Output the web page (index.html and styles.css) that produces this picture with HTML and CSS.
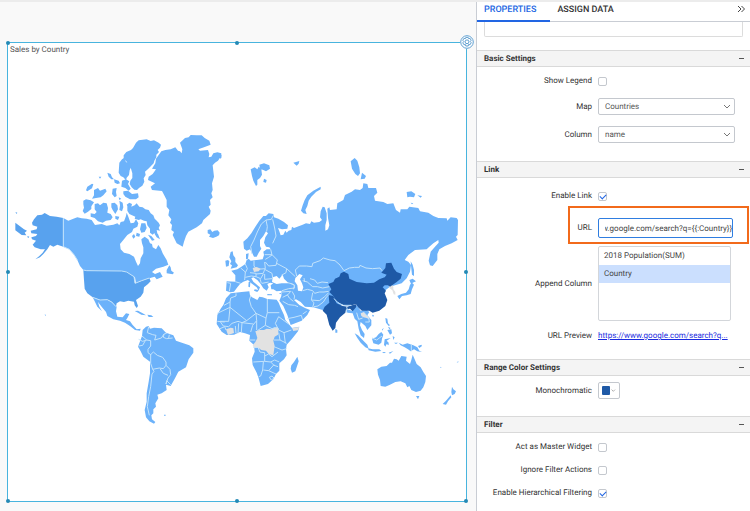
FILE: index.html
```html
<!DOCTYPE html>
<html lang="en">
<head>
<meta charset="utf-8">
<title>Sales by Country</title>
<link rel="stylesheet" href="styles.css">
</head>
<body>
<div class="app">
  <main class="stage">
    <section class="widget">
      <h1 class="widget-title">Sales by Country</h1>
      <svg class="map" viewBox="24 165 1374 1320" role="img" aria-label="World map">
        <!-- North America, Greenland -->
        <g transform="translate(0 330)" class="land">
          <path class="mid" d="M102 328L112 316L126 314L134 309L150 318L170 320L190 324L190 410L172 404L160 410L150 405L142 418L130 432L120 442L106 448L118 438L128 428L135 418L122 418L104 412L98 404L108 392L96 388L94 382L108 378L112 372L94 370L92 362L110 358L112 350L98 346L96 338ZM46 338l12 9 14 11 9 4-7 6 5 8-14-1-19-14zM46 306l6 2-2 4zM82 378l6 2-4 5zM162 402l4 2-2 3z"/>
          <path d="M190 324L205 332L220 326L232 322L245 325L260 326L275 330L285 345L305 342L320 347L340 344L352 340L358 346L362 336L372 334L378 318L380 308L385 320L392 340L402 338L408 328L415 340L412 350L400 356L396 366L382 375L370 390L360 402L362 418L372 428L388 432L402 440L408 455L414 468L420 460L422 445L430 430L430 412L426 400L424 388L434 380L445 388L450 400L456 402L458 412L468 418L475 405L482 415L488 430L500 450L505 464L490 470L468 476L456 486L465 492L480 486L488 500L470 508L464 500L448 505L425 512L408 520L405 502L380 488L365 486L260 482L250 480L240 468L232 450L222 434L208 418L190 410ZM500 480l8-14 4 6 2 10 8 6-4 5-18-3z"/>
          <path d="M408 98l8-7 12-2 12-1 12 5 10-2 14 7 7 6-3 9-7 7 4 6-8 8 0 8-6 10-2 8-8 8-8 8-10 9 2 10-6 10 2 10-6 12-10 7-6 6-8-1-8-7-6-10 2-10 6-8 0-14-4-14-8-12-6-10-8-6 0-12 8-10 14-6 6-6z"/>
          <path d="M358 158l8-10 6-4 6 12 10 5 14-4 3 6-11 6-5 12-2 14-7 8-2 8-8-9-8-4-6-10z"/>
          <path d="M322 188l10 4 4 10 6 6-8 0-8-8zM296 200l8 0-4 6zM262 230l14-9 4 2-4 12-14 9-4-3zM282 240l12-6 6 8 16-6 4 8-10 12-8 6-14 2-12 2 6-10zM338 236l12-2-2 12 2 12-6 4-8-10zM342 208l14 4 4 8-8 2-8-4zM366 212l12-4 10 6-4 8 8 14-6 6-10-8-12-4zM370 244l14-2 12 10 18-2 2 12-8 6-18 0-14-8-6-8zM250 272l8-4 14 3 10 6-8 12 0 8-10 8-10 6-6-8 4-10-2-10zM284 282l10-2 6 6 10-8 10 2 4 14-2 14 10 4 6 10-6 8-14 2-10 6-14-4-10-10-12-4 0-10 12 2 6-6-6-8zM334 280l10-2 8 8 2 12-8 14-8-12-4-8zM358 272l10 6 2 14-4 12-8-4 2-14zM346 318l12 2-4 10-8-4zM356 262l8 4-6 4z"/>
          <path d="M380 284l8-6 8 4-2 8 10-4 6-6 8 10 10 2 8 6 10 2 6 10 8 6 4 10 4 4 8 8 4 8-4 8 4 8-10-2 2 10-8-2-6 6-8-6 0-12-8-10-2-12-8-2-10-4-6 2-12-4 2-6-10-4-8-4-6-10 0-14zM396 378l6-6 4 8-6 6zM424 340l12 0 4 14-6 12-10 2-4-10zM410 368l10 4-2 8-10-2zM444 374l10 4 10 12-8 2zM462 362l12 10 6 16-10-6-6-10z"/>
          <path d="M484 124L496 120L512 118L526 112L534 122L540 124L545 130L547 118L540 98L555 84L566 82L572 75L590 76L605 76L614 84L628 92L632 104L612 112L595 118L600 122L624 120L628 132L626 142L634 140L640 130L652 127L664 130L662 140L654 152L645 158L638 166L642 200L636 220L638 240L634 250L638 262L630 270L632 284L626 290L632 302L630 312L610 330L606 340L590 352L565 365L558 378L552 395L548 410L538 404L530 400L518 375L522 366L514 360L516 345L510 338L514 328L505 316L508 300L500 290L500 270L492 254L486 243L456 240L452 230L465 220L444 210L446 200L458 192L468 178L456 176L466 160L468 146Z"/>
          <path d="M623 360l8-2 6 8 6-4 10-1 6 7-2 8-8 4-10 4-12-4 4-6-8-4z"/>
        </g>
        <!-- United States, Central and South America -->
        <g transform="translate(60 750)" class="land">
          <path class="mid" d="M190 60L200 62L305 63L320 66L342 80L345 100L365 92L388 84L392 94L384 102L372 112L370 128L362 140L348 150L354 168L350 174L344 166L342 155L325 152L312 156L300 154L290 160L288 170L275 155L262 149L240 150L218 142L202 130L194 116L192 90Z"/>
          <path d="M218 142L240 150L262 149L275 156L290 170L288 184L292 200L308 202L318 190L328 192L322 204L318 210L330 214L338 225L350 238L362 236L360 242L345 240L330 228L315 218L300 212L280 208L262 198L258 186L246 172L234 156L238 170L246 184L232 170L224 154ZM344 183l10-1 14 8 10 6-14-2-10-6zM382 194l12 2 6 5-14 0zM74 193l4 2-2 3z"/>
          <path d="M366 258L368 240L378 230L386 228L390 236L402 233L425 235L438 248L460 256L468 272L490 280L508 286L520 295L520 308L506 328L498 352L475 365L465 385L452 408L438 404L440 420L425 430L412 434L415 445L406 460L408 470L400 478L400 490L394 496L396 508L406 516L402 521L388 514L378 502L374 480L380 455L380 430L386 395L390 370L390 335L370 320L362 304L354 290Z"/>
          <path d="M432 494l5 0 0 3-5 0z"/>
          <g class="border">
            <path d="M190 60L200 62L305 63L320 66L342 80L345 100L365 92L388 84M218 142L240 150L262 149L275 156L288 170M366 258L380 270L392 272L392 288L384 298L384 308L392 314L400 306L412 316L428 322L438 336L438 346L450 358L452 374L444 384L438 402M356 268L368 274L380 270M356 288L368 286L376 272M386 230L382 248L398 254L408 256L404 270L424 264L432 252L440 250M432 252L430 262L440 266L458 264M448 254L446 264M392 312L392 340L398 358L402 364L396 372L392 410L386 440L382 470L388 496M398 358L418 354L430 356L438 346M420 356L430 370L444 376M438 402L440 392L452 404"/>
          </g>
        </g>
        <path class="alaska-line" d="M190 654L190 740L208 748L222 764L232 780"/>
        <!-- Arctic islands, British Isles -->
        <g transform="translate(660 390)" class="land">
          <path d="M92 118L104 112L112 118L116 110L124 118L126 134L120 144L112 150L112 164L108 168L100 152L96 138ZM118 104l14-4 16 6 2 10-12 8-8-4-10-4zM132 146l8 4-2 8-8-2zM220 98l8-2 10-3-2 8-6 6zM392 94L404 84L412 92L418 112L420 130L414 138L406 132L396 116ZM422 148L426 128L438 138L434 146ZM302 170L302 178L288 186L274 200L266 212L262 228L256 240L260 252L250 250L243 242L248 226L254 210L262 196L280 182ZM560 186l14-2 12 8-4 10-12-2-8 2zM592 196l14 2-4 5zM572 218l8 2-4 3z"/>
          <path d="M0 72l5 2-1 10-4 2z"/>
          <path d="M16 392l8-2 4 4-2 14-8 2zM32 366L38 364L40 376L46 384L46 396L54 406L50 412L32 416L36 406L30 402L34 394L28 382Z"/>
        </g>
        <!-- Eurasian mainland -->
        <g transform="translate(630 600)" class="land">
          <path d="M102 146L100 125L112 115L124 100L136 80L148 62L160 48L168 48L176 40L190 42L192 52L205 56L222 66L234 76L232 86L216 88L204 84L208 94L212 106L220 104L226 92L230 98L236 92L244 90L246 80L252 84L262 80L278 74L288 70L300 72L304 64L312 68L328 66L336 60L330 52L332 34L338 20L344 22L350 40L350 60L346 76L346 92L354 88L358 76L354 54L352 26L358 22L360 30L380 28L382 10L400 0L405 -15L425 -25L435 -32L450 -30L458 -36L460 -50L472 -48L475 -36L498 -36L502 -22L492 -12L495 2L520 6L532 12L550 10L558 30L570 38L572 28L592 28L598 20L625 24L630 34L655 38L670 48L685 54L710 55L712 62L722 52L740 54L744 60L743 105L738 110L743 120L725 130L705 138L688 148L682 162L682 180L668 198L660 196L656 182L662 155L675 140L686 128L685 120L670 130L658 140L650 148L615 150L595 165L584 180L595 185L603 195L600 215L590 235L575 250L540 260L500 290L420 310L380 318L338 330L310 322L285 320L272 306L258 298L252 300L268 315L285 324L300 330L292 345L275 362L242 375L232 345L220 318L208 302L214 288L215 272L200 274L190 268L184 268L182 256L190 250L180 248L172 252L176 262L170 272L160 265L152 252L142 240L130 232L124 235L130 245L145 258L150 262L146 272L140 262L122 248L114 240L100 245L90 252L82 262L72 275L60 277L48 272L50 244L76 245L76 226L64 212L82 208L94 200L106 192L110 180L116 176L122 182L140 180L158 178L162 165L160 155L170 148L182 148L178 142L168 140L162 128L166 112L174 100L168 94L160 108L150 120L150 138L154 146L146 158L140 170L132 170L126 158L120 148L110 152Z"/>
          <path class="sea" d="M186 246L188 232L200 228L208 236L218 224L222 236L236 250L215 250L200 252ZM256 234L268 222L278 226L270 238L276 250L280 262L276 274L264 272L262 256L254 244Z"/>
          <path d="M108 162L116 160L114 176L108 178ZM116 246l5 0-1 16-5-2zM134 268l12 2-4 6-10-4zM172 282l14 1 0 3-14 0zM207 280l8-2-4 5z"/>
          <path class="border" d="M126 162L122 140L132 120L142 96L154 72L168 60L172 80L170 94M168 60L184 58L190 46M188 58L194 84L198 108L188 130M182 148L186 165L176 172L166 178M164 164L186 164L202 180L198 196L176 198L166 186M200 190L230 206L228 218L214 226M106 192L112 206L106 218M92 204L106 216L104 240M132 182L132 198L140 208L166 206L164 186M106 232L124 228L138 230L138 220L120 218M138 222L160 220L164 208L186 220L188 234M138 230L152 236L160 222M150 236L154 250M164 238L164 222M164 238L186 236M156 250L176 246M52 248L62 250L58 274M76 245L92 250M234 248L252 254L254 264L236 266L216 272M230 206L256 230M256 210L268 198L290 198L306 200L308 190L330 182L340 174L360 180L375 182L390 195L402 212M256 210L260 228"/>
        </g>
        <!-- Africa, southern Asia, Oceania -->
        <g transform="translate(630 750)" class="land">
          <path d="M62 130L76 128L95 126L118 124L120 136L126 142L142 150L148 140L158 142L172 147L200 149L206 158L214 178L222 195L226 210L238 224L246 234L268 230L264 244L245 268L230 284L228 298L230 316L222 328L208 340L208 362L198 372L190 388L174 402L152 408L146 385L140 368L128 345L126 325L134 305L132 285L118 272L120 255L105 250L90 246L72 254L50 255L35 245L20 222L22 195L32 176L40 165L48 145Z"/>
          <path d="M244 346L252 336L262 320L266 334L256 364L246 368L242 356ZM376 236l6 4 0 8-6 0z"/>
          <path d="M408 176L425 182L440 166L452 182L470 180L478 186L472 196L484 210L484 226L472 240L466 228L452 216L450 226L456 240L464 252L462 264L452 256L446 236L442 214L434 206L428 190L412 188Z"/>
          <path d="M434 250l10 6 14 14 14 14 4 12-10-4-14-14-10-14zM474 295l14 3 20 0 6 5-18 2-20-4zM486 266L498 262L506 252L514 246L520 254L516 266L514 278L506 284L490 280ZM524 268l18-4-12 8 6 6 0 8-6-4-4 8-4-6zM516 306l12 0-6 4zM536 308l14-5-10 8zM548 258l6 4-4 8zM552 278l12 0-6 4zM566 278L578 284L592 280L610 286L622 292L628 302L636 306L622 304L612 298L602 304L594 298L584 292L572 286ZM624 288l10-4 2 4-8 6zM526 204l6 2 2 14 6 6-4 2-8-10zM534 230l8 4-4 4zM532 240l12-2 2 12-6 4zM522 234l-6 8 0-4zM486 194l6 2-3 6z"/>
          <path d="M562 138L574 132L588 128L596 118L600 104L606 98L612 104L606 118L602 132L590 136L576 138L568 148ZM598 90l10-4 10 8-10 4-4 6zM602 34L608 44L612 60L612 78L606 74L604 56Z"/>
          <path d="M502 358L514 350L530 348L540 338L546 338L552 326L560 328L566 332L574 318L590 320L588 332L600 342L604 330L608 314L614 328L620 342L632 352L640 366L648 378L646 396L640 412L632 422L618 426L604 420L598 408L592 412L586 400L572 394L556 396L540 404L526 410L512 408L510 390L504 374ZM618 438l10 0-4 10zM726 410l4 8 8 6-4 8-8 4-2-10zM722 436l2 6-10 12-6 10-10-2 10-10zM690 350l5 3-3 1zM740 338l4-4 2 2z"/>
          <path class="none" d="M48 238l14-5 8 2 2 14-18 6zM136 244l12-4 14 0 8-4 16 2 6-6 14 2-2 20-10 6-4 12 4 16-4 28-14-4-8-10-14-2-8-6-14 0-4-8 8-10 6-12zM246 234l22-3-4 10-14 2zM452 190l10-4 6 8 8 6 2 8-8-4-10-2-6-4zM536 108l10-4 4 6 0 8 6 8 0 8-5-1-4-12-8-6zM128 54l12-3 12 5-6 8-14 2z"/>
          <g class="border">
            <path d="M402 62l16-8 16-2 14 0 2-6 18 8 20 2 22-2 6 8M278 92l14 4 16 14 14 0 16 4 20-4M282 84l2 12M300 86l14 4 8 10 14-4 18 2M278 122l14-4 16 4 6 8 14-4 14 0 14-2M308 128l-4 22 8 8-4 14M304 150l24 2 16-12 12-12M246 124l8 14-2 10M216 126l26-2M218 142l16-8 8-10M232 134l6 10 12 10M218 154l18 10 18 2 10 4M232 206l20-4 22-6 4 14M278 192l12-8M242 100l12 6-4 12"/>
            <path d="M42 166L60 156L62 144L78 138L78 130M60 156L60 172L22 190M60 172L110 212L138 190L124 170L118 150L122 138M60 172L56 214L30 214M172 147L172 188L208 188M138 190L168 204L172 188M30 214L40 228L56 230L66 220L84 214L96 218L110 212M22 214L44 216M30 236L44 230L48 240M78 250L76 228M84 250L86 220M94 246L96 218M138 190L140 212L128 226L122 246M96 218L130 222M140 212L140 240M168 204L166 226L142 242M166 226L186 236L204 232M206 200L196 220L206 240L222 248L244 240M206 200L236 222M206 248L210 270L230 280M222 248L226 280M192 270L210 270M192 290L216 300L230 296M130 292L144 292L150 306L164 308L164 334L130 336M164 318L176 312L186 320L204 306M164 334L182 336L194 330L208 336M160 336L158 360L152 378L146 380M160 360L176 362L192 344M182 336L192 346L204 350M176 362L198 372M178 382l8-4 6 6-8 6zM120 270L136 270"/>
            <path d="M398 170L408 172L410 188M440 188l6 20 12-4M462 188l14 14 2 14-12 0M486 264l14 6 16-12M604 282l0 22"/>
          </g>
          <path class="high" d="M355 102L370 96L375 86L388 80L392 70L402 65L415 72L418 86L440 96L470 100L492 98L508 88L524 82L530 74L514 68L526 54L528 40L544 38L552 56L560 66L576 72L572 86L560 96L540 110L534 106L524 106L518 112L528 122L524 130L532 150L526 168L508 182L488 188L478 182L456 182L444 172L438 162L425 166L410 168L392 162L378 152L370 138L358 126L364 118Z"/>
          <path class="high" d="M356 135L370 138L376 152L380 160L398 168L412 170L426 166L440 162L438 172L428 184L420 176L408 178L406 188L390 202L378 218L376 234L368 242L358 225L350 194L338 182L344 170L358 158Z"/>
          <path class="border" d="M372 146L384 158L400 166L424 166M410 170L412 180M312 170L324 168L340 156L350 140L356 135"/>
        </g>
      </svg>
      <i class="grip g1"></i><i class="grip g2"></i><i class="grip g4"></i><i class="grip g5"></i><i class="grip g6"></i><i class="grip g7"></i><i class="grip g8"></i>
      <button class="gear" type="button" aria-label="Widget settings">
        <svg viewBox="0 0 14 14"><circle cx="7" cy="7" r="6.300"/><path d="M5.800 2.400h2.400l.4 1.300 1.400-.4 1.200 2-1 1 1 1.400-1.200 2.100-1.400-.4-.4 1.600H5.800l-.4-1.500-1.400.3-1.200-2 1-1.200-1-1.300L4 3.300l1.400.4z"/><circle cx="7" cy="6.800" r="1.900"/></svg>
      </button>
    </section>
  </main>

  <aside class="panel">
    <nav class="tabs">
      <button type="button" class="tab active">PROPERTIES</button>
      <button type="button" class="tab">ASSIGN DATA</button>
      <button type="button" class="collapse" aria-label="Collapse panel"><svg viewBox="0 0 8 8"><path d="M1 1l3 3-3 3M4.500 1l3 3-3 3"/></svg></button>
    </nav>
    <div class="scrolled"><textarea aria-label="Description"></textarea></div>

    <section>
      <h2 class="head">Basic Settings<button type="button" aria-label="Collapse Basic Settings"></button></h2>
      <div class="rows basic">
        <div class="row"><label for="legend">Show Legend</label><input id="legend" type="checkbox"></div>
        <div class="row"><label for="map">Map</label><span class="pick"><select id="map"><option>Countries</option></select><svg viewBox="0 0 8 5"><path d="M1 1l3 3 3-3"/></svg></span></div>
        <div class="row"><label for="column">Column</label><span class="pick"><select id="column"><option>name</option></select><svg viewBox="0 0 8 5"><path d="M1 1l3 3 3-3"/></svg></span></div>
      </div>
    </section>

    <section>
      <h2 class="head">Link<button type="button" aria-label="Collapse Link"></button></h2>
      <div class="rows link">
        <div class="row"><label for="enable">Enable Link</label><input id="enable" type="checkbox" checked></div>
        <div class="row url-row"><label for="url">URL</label><input id="url" class="url" type="text" value="https://www.google.com/search?q={{:Country}}"></div>
        <div class="row list-row"><span id="append">Append Column</span>
          <div class="list" role="listbox" aria-labelledby="append">
            <button type="button" role="option" aria-selected="false">2018 Population(SUM)</button>
            <button type="button" role="option" aria-selected="true">Country</button>
          </div>
        </div>
        <div class="row"><span>URL Preview</span><a href="#preview">https://www.google.com/search?q...</a></div>
      </div>
    </section>

    <section>
      <h2 class="head">Range Color Settings<button type="button" aria-label="Collapse Range Color Settings"></button></h2>
      <div class="rows range">
        <div class="row"><span>Monochromatic</span><button type="button" class="color" aria-label="Monochromatic color"><i></i><svg viewBox="0 0 8 5"><path d="M1 1l3 3 3-3"/></svg></button></div>
      </div>
    </section>

    <section>
      <h2 class="head">Filter<button type="button" aria-label="Collapse Filter"></button></h2>
      <div class="rows filter">
        <div class="row"><label for="master">Act as Master Widget</label><input id="master" type="checkbox"></div>
        <div class="row"><label for="ignore">Ignore Filter Actions</label><input id="ignore" type="checkbox"></div>
        <div class="row"><label for="hier">Enable Hierarchical Filtering</label><input id="hier" type="checkbox" checked></div>
      </div>
    </section>
  </aside>
</div>
<script src="script.js"></script>
</body>
</html>
```
FILE: styles.css
```css
* { box-sizing: border-box; }
body { margin: 0; font-family: Roboto, "Liberation Sans", sans-serif; font-size: 8px; line-height: 12px; color: #333; text-rendering: geometricPrecision; }
button, input, select, textarea { font: inherit; color: inherit; margin: 0; padding: 0; text-rendering: inherit; }
button { background: none; border: 0; }
svg { display: block; fill: none; }

.app { display: flex; min-height: 100vh; border-top: 2px solid #ececec; }
.stage { flex: 1; display: flex; padding: 40px 9px 9px 7px; background: #f9f9f9; }
.widget { position: relative; flex: 1; display: flex; flex-direction: column; background: #fff; border: 1px solid #48b4de; }
.widget-title { margin: 0; padding: 1px 2px 0; font-size: 8px; line-height: 11px; font-weight: 400; color: #555; }
.map { width: 100%; }
.land path { fill: #6cb2fa; }
.land .mid { fill: #58a2ee; }
.land .high { fill: #1e59a6; }
.land .none { fill: #e2e2e2; }
.land .sea { fill: #fff; }
.land .border path, .land path.border, .alaska-line { fill: none; stroke: #c3e3fb; stroke-width: 3; }

.grip { position: absolute; width: 4px; height: 4px; border-radius: 50%; background: #2489b5; }
.g1, .g4, .g6 { left: -2px; }
.g2, .g7 { left: calc(50% - 2px); }
.g5, .g8 { right: -2px; }
.g1, .g2 { top: -2px; }
.g4, .g5 { top: calc(50% - 2px); }
.g6, .g7, .g8 { bottom: -2px; }
.gear { position: absolute; top: -8px; right: -8px; width: 14px; height: 14px; border-radius: 50%; background: #fff; }
.gear svg { stroke: #5f9fd0; stroke-width: 1; }

.panel { flex: 0 0 274px; border-left: 1px solid #c9cdd4; background: #fff; }
.tabs { display: flex; height: 20px; border-bottom: 1px solid #c9cdd4; }
.tab { height: 20px; padding: 0 14px 2px 7px; font-size: 9px; font-weight: 500; border-bottom: 2px solid transparent; }
.tab.active { color: #2266e3; border-color: #2266e3; }
.collapse { margin: 0 5px 6px auto; width: 8px; }
.collapse svg { stroke: #444; }
.scrolled { padding: 0 7px 14px; height: 28px; }
.scrolled textarea { display: block; width: 100%; height: 15px; border: 1px solid #dcdcdc; border-top: 0; border-radius: 0 0 2px 2px; resize: none; }

.head { display: flex; align-items: center; justify-content: space-between; height: 17px; margin: 0; padding: 0 6px 0 7px; font-size: 8px; font-weight: 700; background: #f4f4f4; border: solid #d9d9d9; border-width: 1px 0; }
.head button { width: 5px; height: 1px; background: #555; }
.rows { display: grid; }
.row { display: grid; grid-template-columns: 115px 1fr; column-gap: 6px; align-items: center; }
.row > :first-child { text-align: right; }
.basic { gap: 11px; padding: 8px 15px 18px 0; }
.row input[type="checkbox"] { appearance: none; display: grid; place-items: center; width: 9px; height: 9px; border: 1px solid #c4c8ce; border-radius: 2px; }
.row input:checked::before { content: ""; width: 5px; height: 3px; border: solid #2266e3; border-width: 0 0 1px 1px; transform: rotate(-45deg); }
.pick { position: relative; }
.pick select { appearance: none; display: block; width: 100%; height: 17px; padding: 0 6px; background: #fff; border: 1px solid #c4c8ce; border-radius: 2px; color: #555; }
.pick svg { position: absolute; right: 4px; top: 6px; width: 8px; height: 5px; pointer-events: none; }
.pick svg, .color svg { stroke: #777; }

.link { padding: 12px 19px 17px 0; }
.url-row { position: relative; height: 38px; margin: 4px -2px 2px 0; padding-top: 6px; }
.url-row::after { content: ""; position: absolute; inset: 0 -16px 0 91px; border: 2px solid #f26a1b; pointer-events: none; }
.url { width: 100%; height: 20px; padding: 0 0 0 6px; border: 1px solid #2f7de0; border-radius: 2px; outline: 0; color: #444; }
.list-row { margin-bottom: 9px; }
.list { height: 75px; border: 1px solid #d3d6da; border-radius: 2px; }
.list button { display: block; width: 100%; height: 18px; padding: 0 5px; text-align: left; color: #444; }
.list [aria-selected="true"] { background: #cbdffe; }
.link a { color: #1a2be0; }

.range { padding: 6px 0 17px; }
.color { display: flex; align-items: center; gap: 1px; width: 22px; height: 17px; padding: 0 3px; border: 1px solid #c4c8ce; border-radius: 2px; }
.color i { width: 9px; height: 9px; border-radius: 1px; background: #1e59a6; }
.color svg { width: 5px; }
.filter { gap: 11px; padding: 8px 0; }
```
FILE: script.js
```js
const url = document.getElementById("url");
url.focus();
url.setSelectionRange(url.value.length, url.value.length);
url.scrollLeft = url.scrollWidth;
```
